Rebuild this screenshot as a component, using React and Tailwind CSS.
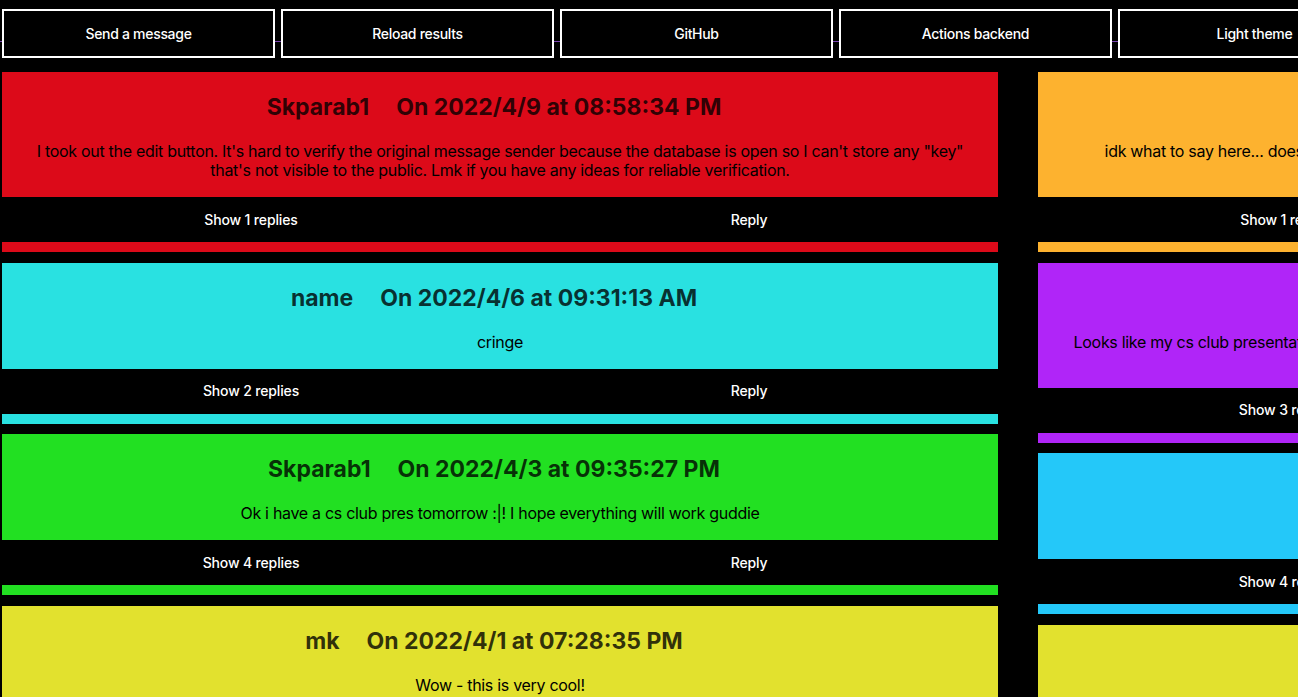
const buttons = ['Send a message', 'Reload results', 'GitHub', 'Actions backend', 'Light theme', 'About']

const left = [
  {
    name: 'Skparab1',
    date: 'On 2022/4/9 at 08:58:34 PM',
    text: 'I took out the edit button. It\'s hard to verify the original message sender because the database is open so I can\'t store any "key" that\'s not visible to the public. Lmk if you have any ideas for reliable verification.',
    replies: 1,
    bg: 'bg-[#dc0a19]',
  },
  { name: 'name', date: 'On 2022/4/6 at 09:31:13 AM', text: 'cringe', replies: 2, bg: 'bg-[#29e1e1]' },
  {
    name: 'Skparab1',
    date: 'On 2022/4/3 at 09:35:27 PM',
    text: 'Ok i have a cs club pres tomorrow :|! I hope everything will work guddie',
    replies: 4,
    bg: 'bg-[#22e022]',
  },
  { name: 'mk', date: 'On 2022/4/1 at 07:28:35 PM', text: 'Wow - this is very cool!', replies: 1, bg: 'bg-[#e2e12e]' },
]

const right = [
  {
    name: 'Skparab1',
    date: 'On 2022/4/8 at 10:12:05 PM',
    lines: [
      'idk what to say here... does anyone actually read these messages or am i just talking to myself here all alone at night :((',
      'lol',
    ],
    replies: 1,
    bg: 'bg-[#fdb22f]',
  },
  {
    name: 'Skparab1',
    date: 'On 2022/4/4 at 06:44:51 PM',
    text: 'Looks like my cs club presentation went very well, a bunch of people signed up and left messages on here. Thanks to everyone for testing it!',
    replies: 3,
    bg: 'bg-[#b025f8]',
  },
  { name: 'joe', date: 'On 2022/4/2 at 04:15:40 PM', text: 'hi', replies: 4, bg: 'bg-[#24c8f9]' },
  { name: 'Skparab1', date: 'On 2022/3/31 at 11:02:19 AM', text: 'first', replies: 0, bg: 'bg-[#e2e12e]' },
]

function Card({ msg }) {
  return (
    <div className={`${msg.bg} w-[996px] pb-[10px]`}>
      <div className="px-8 pt-5 pb-[17px] text-center">
        <h2 className="flex h-[30px] items-center justify-center gap-[27px] pr-3 text-[23px] leading-[30px] font-bold text-black/80">
          <span>{msg.name}</span>
          <span>{msg.date}</span>
        </h2>
        <p className="mt-5 text-base leading-[19px] tracking-[-0.3px] text-black">
          {msg.lines ? (
            <>
              {msg.lines[0]}
              <br />
              {msg.lines[1]}
            </>
          ) : (
            msg.text
          )}
        </p>
      </div>
      <div className="flex h-[45px] bg-black text-sm font-medium tracking-[-0.15px] text-white">
        <button type="button" className="flex-1">
          Show {msg.replies} replies
        </button>
        <button type="button" className="flex-1">
          Reply
        </button>
      </div>
    </div>
  )
}

export default function App() {
  return (
    <div className="h-screen w-screen overflow-hidden bg-black font-['Inter',sans-serif]">
      <div className="relative flex w-[2100px] gap-[6px] pt-[9px] pl-[2px]">
        <div className="absolute top-[41px] left-0 h-px w-full bg-[#7b46b2]" />
        {buttons.map((b) => (
          <button
            key={b}
            type="button"
            className="relative h-[49px] w-[273px] shrink-0 border-2 border-white bg-black text-sm font-medium tracking-[-0.3px] text-white"
          >
            {b}
          </button>
        ))}
      </div>
      <div className="mt-[14px] flex w-[2100px] items-start gap-[40px] pl-[2px]">
        <div className="flex flex-col gap-[10.5px]">
          {left.map((m, i) => (
            <Card key={i} msg={m} />
          ))}
        </div>
        <div className="flex flex-col gap-[10.5px]">
          {right.map((m, i) => (
            <Card key={i} msg={m} />
          ))}
        </div>
      </div>
    </div>
  )
}
